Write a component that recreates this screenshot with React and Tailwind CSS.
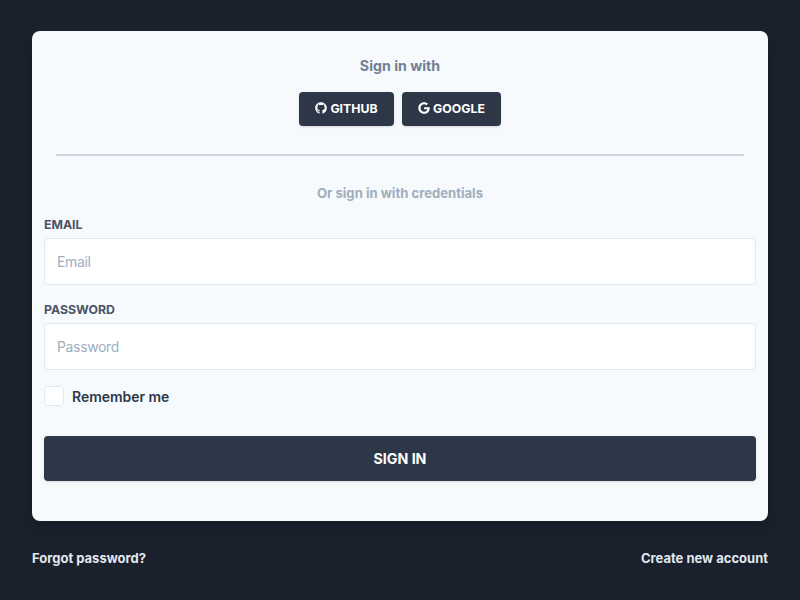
import React from "react";
import { FaGithub, FaGoogle } from "react-icons/fa";

function SocialButton({ icon: Icon, children, className }) {
  return (
    <button className={`flex h-[34px] items-center justify-center rounded bg-[#2d3748] text-[12.3px] font-bold text-white uppercase shadow ${className}`}>
      <Icon className="relative -top-px mr-[3px] h-3 w-3 shrink-0" />
      {children}
    </button>
  );
}

function Field({ label, type }) {
  return (
    <div>
      <label className="mb-[7px] block h-3 text-[12.3px] leading-3 font-bold text-[#4a5568] uppercase">{label}</label>
      <input type={type} placeholder={label} className="block h-[47px] w-full rounded border border-[#e2e8f0] bg-white px-3 text-sm tracking-[-0.025em] text-[#4a5568] placeholder:text-[#a0aec0]" />
    </div>
  );
}

export default function App() {
  return (
    <main className="h-[600px] w-full bg-[#1a202c] px-8 pt-[31px] font-['Inter',sans-serif]">
      <section className="h-[490px] rounded-lg bg-[#f7fafc] px-3 pt-6 shadow-lg">
        <h1 className="text-center text-[14.2px] leading-[21px] font-bold text-[#718096]">Sign in with</h1>
        <div className="mt-4 flex justify-center gap-2">
          <SocialButton icon={FaGithub} className="w-[95px]">Github</SocialButton>
          <SocialButton icon={FaGoogle} className="w-[99px]">Google</SocialButton>
        </div>
        <hr className="mx-3 mt-7 border-t-2 border-[#cbd5e0]" />
        <p className="mt-[27px] text-center text-[13.1px] leading-5 font-bold text-[#a0aec0]">Or sign in with credentials</p>
        <form className="mt-4 flex flex-col gap-[19px]">
          <Field label="Email" type="email" />
          <Field label="Password" type="password" />
          <label className="-mt-[3px] flex h-5 items-center text-sm font-semibold text-[#2d3748]">
            <input type="checkbox" className="mr-2 h-5 w-5 appearance-none rounded border border-[#e2e8f0] bg-white" />
            <span className="pt-0.5 tracking-[-0.003em]">Remember me</span>
          </label>
          <button type="button" className="mt-[11px] h-[45px] rounded bg-[#2d3748] text-[14.2px] font-bold text-white uppercase shadow">Sign in</button>
        </form>
      </section>
      <nav className="mt-[27px] flex justify-between text-[13px] leading-5 font-bold text-[#e2e8f0]">
        <a>Forgot password?</a>
        <a>Create new account</a>
      </nav>
    </main>
  );
}
